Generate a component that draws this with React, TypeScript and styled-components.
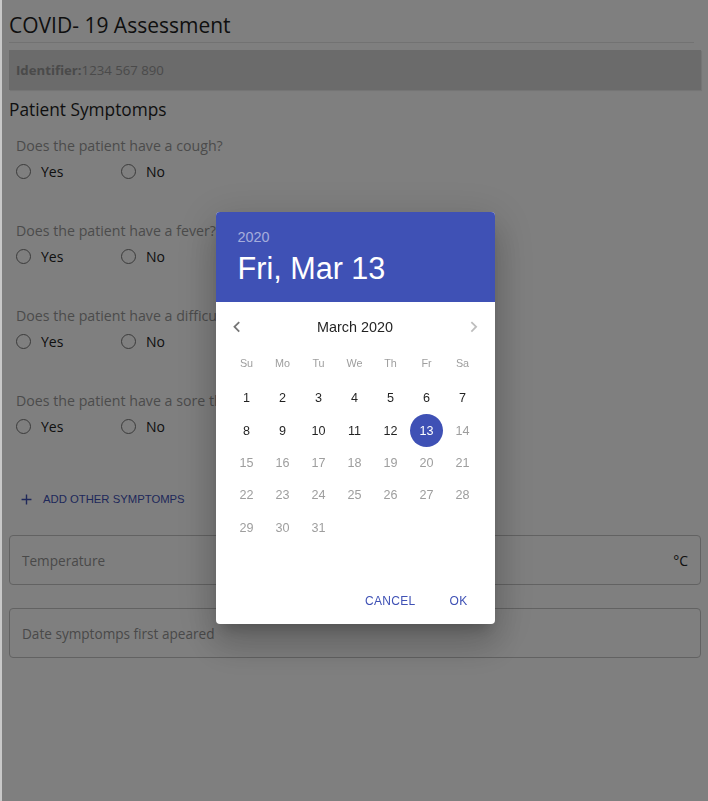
import type { FC } from "react";
import styled, { createGlobalStyle, css } from "styled-components";

const GlobalStyle = createGlobalStyle`
  html, body {
    margin: 0;
    padding: 0;
    background: #c8c8c8;
  }
  body {
    padding-left: 2px;
  }
  * {
    box-sizing: border-box;
  }
`;

const pageFont = `"Open Sans", "Noto Sans", sans-serif`;
const dialogFont = `"Liberation Sans", Arial, sans-serif`;
const primary = "#3f51b5";

const Page = styled.div`
  min-height: 100vh;
  background: #ffffff;
  padding: 0 7px 40px 7px;
  font-family: ${pageFont};
`;

const Title = styled.h1`
  margin: 0;
  padding-top: 11px;
  font-size: 21px;
  line-height: 28px;
  font-weight: 400;
  color: #1e1e1e;
`;

const Divider = styled.hr`
  margin: 3px 7px 0 0;
  border: none;
  height: 1px;
  background: #e4e4e4;
`;

const IdentifierBar = styled.div`
  margin-top: 7px;
  height: 40px;
  display: flex;
  align-items: center;
  padding-left: 7px;
  background: #d6d6d6;
  box-shadow: 1px 1px 1px rgba(0, 0, 0, 0.08);
  font-size: 13.2px;
  color: #959595;
  b {
    font-weight: 700;
  }
`;

const SectionTitle = styled.h2`
  margin: 8px 0 0;
  font-size: 17.3px;
  line-height: 24px;
  font-weight: 400;
  color: #1e1e1e;
`;

const QuestionList = styled.div`
  margin-top: 14px;
  display: flex;
  flex-direction: column;
  gap: 38px;
  padding-left: 7px;
`;

const Question = styled.div`
  display: flex;
  flex-direction: column;
  gap: 3px;
`;

const QuestionText = styled.p`
  margin: 0;
  font-size: 14.2px;
  line-height: 20px;
  color: #979797;
  white-space: nowrap;
`;

const RadioRow = styled.div`
  display: flex;
  height: 24px;
  align-items: center;
`;

const RadioOption = styled.label`
  width: 105px;
  display: flex;
  align-items: center;
  gap: 10px;
  font-size: 14px;
  color: #222;
`;

const RadioCircle = styled.span`
  width: 15px;
  height: 15px;
  border-radius: 50%;
  border: 1.6px solid #757575;
`;

const AddButton = styled.button`
  margin: 45px 0 0 9px;
  height: 32px;
  display: flex;
  align-items: center;
  gap: 8px;
  padding: 0;
  border: none;
  background: transparent;
  font-family: ${dialogFont};
  font-size: 11.3px;
  color: ${primary};
  text-transform: uppercase;
`;

const Fields = styled.div`
  margin-top: 20px;
  display: flex;
  flex-direction: column;
  gap: 23px;
`;

const Field = styled.div`
  height: 50px;
  border: 1px solid #c4c4c4;
  border-radius: 4px;
  display: flex;
  align-items: center;
  justify-content: space-between;
  padding: 0 12px;
  font-size: 13.6px;
  color: #939393;
`;

const Unit = styled.span`
  font-size: 14px;
  color: #222;
`;

/* dialog */

const Backdrop = styled.div`
  position: fixed;
  top: 0;
  right: 0;
  bottom: 0;
  left: 2px;
  background: rgba(0, 0, 0, 0.5);
  display: flex;
  justify-content: center;
  align-items: flex-start;
  padding-top: 212px;
`;

const Dialog = styled.div`
  width: 279px;
  border-radius: 4px;
  overflow: hidden;
  background: #fff;
  font-family: ${dialogFont};
  box-shadow: 0 10px 14px -6px rgba(0, 0, 0, 0.2),
    0 22px 34px 3px rgba(0, 0, 0, 0.14), 0 8px 42px 7px rgba(0, 0, 0, 0.12);
`;

const Toolbar = styled.div`
  height: 90px;
  background: ${primary};
  padding: 0 22px 3px;
  display: flex;
  flex-direction: column;
  justify-content: center;
`;

const Year = styled.div`
  font-size: 14.4px;
  line-height: 25px;
  color: rgba(255, 255, 255, 0.54);
`;

const DateText = styled.div`
  font-size: 30.6px;
  line-height: 37px;
  color: #fff;
`;

const CalBody = styled.div`
  height: 275px;
  padding-top: 7px;
`;

const MonthHeader = styled.div`
  height: 36px;
  padding: 0 10px;
  display: flex;
  align-items: center;
  justify-content: space-between;
  font-size: 14.4px;
  color: rgba(0, 0, 0, 0.87);
`;

const Arrow = styled.svg<{ $disabled?: boolean }>`
  width: 21.6px;
  height: 21.6px;
  fill: ${({ $disabled }) =>
    $disabled ? "rgba(0,0,0,0.26)" : "rgba(0,0,0,0.54)"};
`;

const grid = css`
  display: grid;
  grid-template-columns: repeat(7, 36px);
  padding: 0 0 0 13px;
`;

const WeekDays = styled.div`
  ${grid}
  margin-top: 9px;
  height: 18px;
  align-items: center;
  font-size: 10.8px;
  color: #9e9e9e;
  span {
    text-align: center;
  }
`;

const Days = styled.div`
  ${grid}
  margin-top: 10px;
  grid-auto-rows: 32.4px;
`;

const Day = styled.div<{ $selected?: boolean; $disabled?: boolean }>`
  display: flex;
  align-items: center;
  justify-content: center;
  span {
    width: 33px;
    height: 33px;
    border-radius: 50%;
    display: flex;
    align-items: center;
    justify-content: center;
    font-size: 12.6px;
    color: ${({ $selected, $disabled }) =>
      $selected ? "#fff" : $disabled ? "#9e9e9e" : "rgba(0,0,0,0.87)"};
    background: ${({ $selected }) => ($selected ? primary : "transparent")};
  }
`;

const Actions = styled.div`
  height: 47px;
  padding: 0 7px;
  display: flex;
  align-items: center;
  justify-content: flex-end;
  gap: 7px;
`;

const TextButton = styled.button`
  height: 32px;
  min-width: 58px;
  padding: 0 7px;
  border: none;
  background: transparent;
  font-family: ${dialogFont};
  font-size: 12px;
  letter-spacing: 0.3px;
  color: ${primary};
`;

const questions = [
  "Does the patient have a cough?",
  "Does the patient have a fever?",
  "Does the patient have a difficulty breathing?",
  "Does the patient have a sore throat?",
];

const weekDays = ["Su", "Mo", "Tu", "We", "Th", "Fr", "Sa"];
const monthDays = Array.from({ length: 31 }, (_, i) => i + 1);

const App: FC = () => {
  return (
    <>
      <GlobalStyle />
      <Page>
        <Title>COVID- 19 Assessment</Title>
        <Divider />
        <IdentifierBar>
          <b>Identifier:</b>1234 567 890
        </IdentifierBar>
        <SectionTitle>Patient Symptomps</SectionTitle>
        <QuestionList>
          {questions.map((q) => (
            <Question key={q}>
              <QuestionText>{q}</QuestionText>
              <RadioRow>
                <RadioOption>
                  <RadioCircle />
                  Yes
                </RadioOption>
                <RadioOption>
                  <RadioCircle />
                  No
                </RadioOption>
              </RadioRow>
            </Question>
          ))}
        </QuestionList>
        <AddButton>
          <svg width="17" height="17" viewBox="0 0 24 24" fill={primary}>
            <path d="M19 13h-6v6h-2v-6H5v-2h6V5h2v6h6v2z" />
          </svg>
          Add other symptomps
        </AddButton>
        <Fields>
          <Field>
            Temperature
            <Unit>°C</Unit>
          </Field>
          <Field>Date symptomps first apeared</Field>
        </Fields>
      </Page>

      <Backdrop>
        <Dialog>
          <Toolbar>
            <Year>2020</Year>
            <DateText>Fri, Mar 13</DateText>
          </Toolbar>
          <CalBody>
            <MonthHeader>
              <Arrow viewBox="0 0 24 24">
                <path d="M15.41 16.59L10.83 12l4.58-4.59L14 6l-6 6 6 6 1.41-1.41z" />
              </Arrow>
              March 2020
              <Arrow viewBox="0 0 24 24" $disabled>
                <path d="M8.59 16.59L13.17 12 8.59 7.41 10 6l6 6-6 6-1.41-1.41z" />
              </Arrow>
            </MonthHeader>
            <WeekDays>
              {weekDays.map((d) => (
                <span key={d}>{d}</span>
              ))}
            </WeekDays>
            <Days>
              {monthDays.map((d) => (
                <Day key={d} $selected={d === 13} $disabled={d > 13}>
                  <span>{d}</span>
                </Day>
              ))}
            </Days>
          </CalBody>
          <Actions>
            <TextButton>CANCEL</TextButton>
            <TextButton>OK</TextButton>
          </Actions>
        </Dialog>
      </Backdrop>
    </>
  );
};

export default App;
